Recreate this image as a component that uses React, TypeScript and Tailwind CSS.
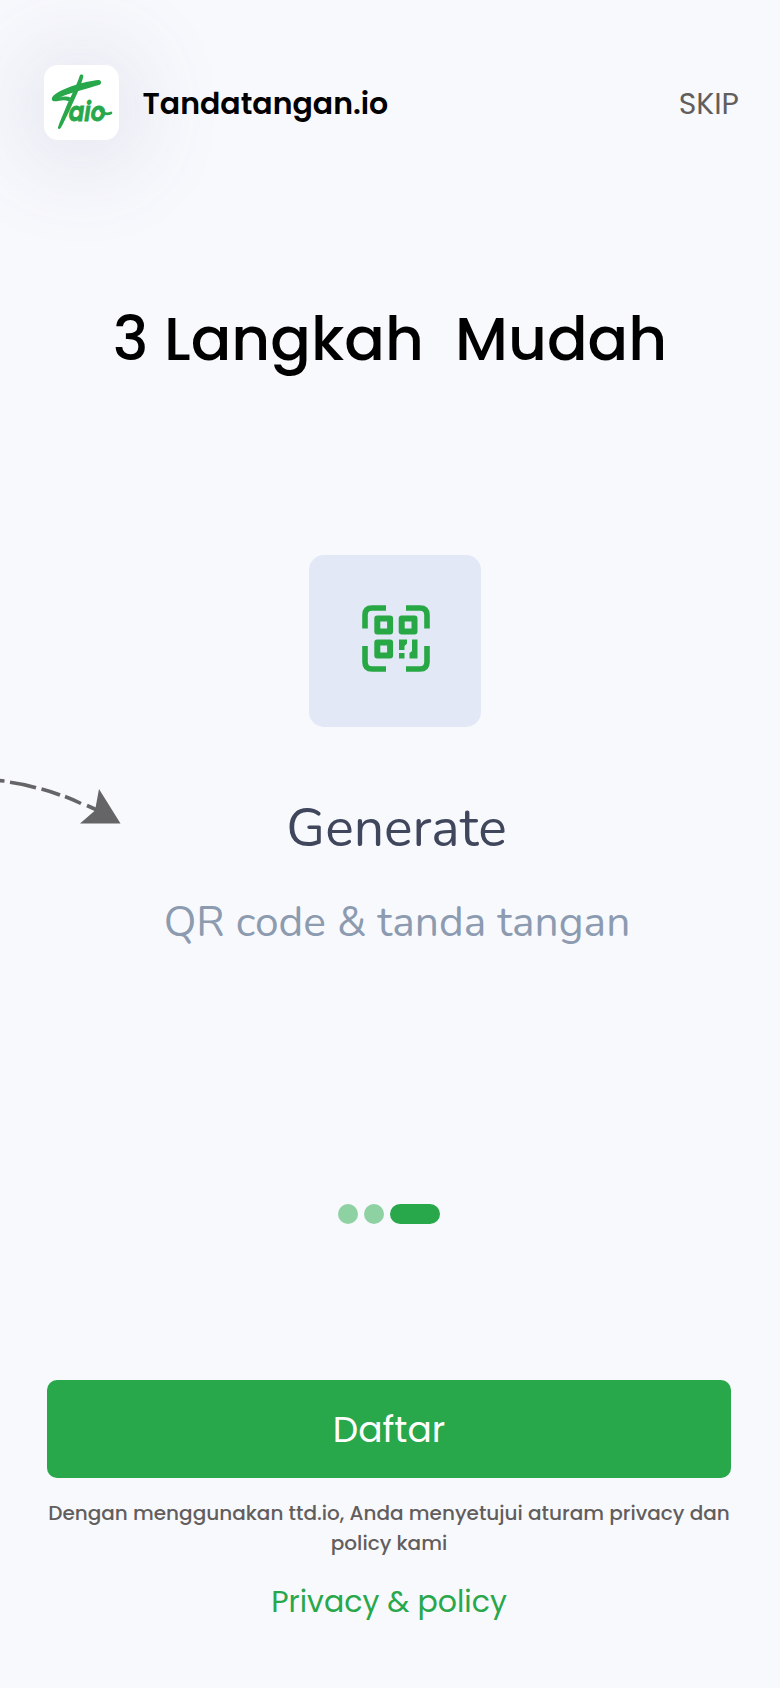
function Logo() {
  return (
    <div className="flex size-[75px] items-center justify-center rounded-[14px] bg-white shadow-[0_6px_100px_8px_rgba(96,90,140,0.2)]">
      <svg viewBox="0 0 225 225" className="size-[75px] text-[#28a74b]" fill="currentColor" role="img" aria-label="Taio">
        <path d="M107 33 C108 27 118 27 118 34 C112 62 92 102 79 131 C69 151 59 174 50 189 C47 194 40 192 42 187 C48 168 57 149 65 129 C78 98 98 62 107 33Z" />
        <path d="M163 45 C172 44 174 56 167 59 C134 70 84 80 46 98 C57 94 70 93 81 98 L74 109 C58 102 46 109 32 109 C22 109 21 99 28 92 C56 68 126 48 163 45Z" />
        <text
          x="74"
          y="167"
          textLength="110"
          lengthAdjust="spacingAndGlyphs"
          className="font-[Poppins,Inter,sans-serif] text-[78px] font-semibold italic"
          stroke="currentColor"
          strokeWidth="2.5"
        >
          aio
        </text>
        <path d="M170 136 Q183 152 201 144" fill="none" stroke="currentColor" strokeWidth="8" strokeLinecap="round" />
      </svg>
    </div>
  );
}

function ScanIcon() {
  return (
    <svg viewBox="0 0 172 172" className="size-[172px] text-[#28a745]" fill="none" stroke="currentColor" aria-hidden="true">
      <g strokeWidth="5.6">
        <path d="M56 73.500V60q0-7 7-7h14" />
        <path d="M97 53h14q7 0 7 7v13.500" />
        <path d="M56 91v16q0 7 7 7h14" />
        <path d="M97 114h14q7 0 7-7V91" />
      </g>
      <g strokeWidth="6" strokeLinejoin="round">
        <rect x="68.300" y="63.500" width="12.800" height="13" />
        <rect x="92.700" y="63.500" width="12.800" height="13" />
        <rect x="68.300" y="87.500" width="12.800" height="13" />
      </g>
      <g fill="currentColor" stroke="none">
        <path d="M90 84.600h8v4l-2.500 2.500v4H90z" />
        <path d="M90 98h5.500v5.500H90z" />
        <path d="M103 84.600h5.500v19h-8V98l2.500-2z" />
      </g>
    </svg>
  );
}

function CurvedArrow() {
  return (
    <svg viewBox="0 0 125 60" className="absolute top-[775px] left-0 h-[60px] w-[125px] text-[#656567]" aria-hidden="true">
      <g fill="none" stroke="currentColor" strokeWidth="3.600">
        <path d="M-2 5.500L4.500 6" />
        <path d="M10 7.200Q24 9 36 12.800" />
        <path d="M41.500 14Q51 16.500 60 20" />
        <path d="M65 21.500Q73 24.500 81 28.500" />
        <path d="M87 30.500L98 35.500" />
      </g>
      <path d="M99 14L120.500 48.500H80L95 35.500Z" fill="currentColor" />
    </svg>
  );
}

export default function App() {
  return (
    <main className="relative flex h-[1688px] w-[780px] flex-col overflow-hidden bg-[#f8f9fd] pt-[65px] font-[Poppins,Inter,sans-serif] text-black">
      <header className="flex h-[76px] items-start pr-[41px] pl-[43.500px]">
        <Logo />
        <span className="mt-[15.500px] ml-6 text-[30px] leading-[45px] font-semibold">Tandatangan.io</span>
        <button className="mt-[15.500px] ml-auto text-[30px] leading-[45px] text-[#625e5e]">SKIP</button>
      </header>

      <h1 className="mt-[153px] text-center text-[60px] leading-[90px] font-medium whitespace-pre">3 Langkah  Mudah</h1>

      <section className="mt-[171px] flex flex-col items-center pl-[10px] font-[Nunito,'Noto_Sans',sans-serif]">
        <div className="rounded-[15px] bg-[#e3e8f7]">
          <ScanIcon />
        </div>
        <h2 className="mt-[70px] pl-[3px] text-[53.500px] leading-[64px] font-[450] text-[#40465c]">Generate</h2>
        <p className="mt-[33px] pl-[4px] text-[42.500px] leading-[56px] text-[#8c9bb0]">QR code &amp; tanda tangan</p>
      </section>
      <CurvedArrow />

      <div className="mt-[254px] flex justify-center gap-1.5 pr-0.5">
        <span className="size-5 rounded-full bg-[#8ed1a2]" />
        <span className="size-5 rounded-full bg-[#8ed1a2]" />
        <span className="h-5 w-[50px] rounded-full bg-[#28a74b]" />
      </div>

      <footer className="mt-[156px] flex flex-col pr-[49px] pl-[47px] text-center">
        <button className="h-[98px] rounded-[10px] bg-[#28a74b] pt-0.5 text-[36px] text-white">Daftar</button>
        <p className="-mx-2 mt-5 text-xl leading-[30px] font-medium text-[#625e5e]">
          Dengan menggunakan ttd.io, Anda menyetujui aturam privacy dan
          <br />
          policy kami
        </p>
        <a className="mt-[21px] text-[30px] leading-[45px] text-[#28a74b]">Privacy &amp; policy</a>
      </footer>
    </main>
  );
}
